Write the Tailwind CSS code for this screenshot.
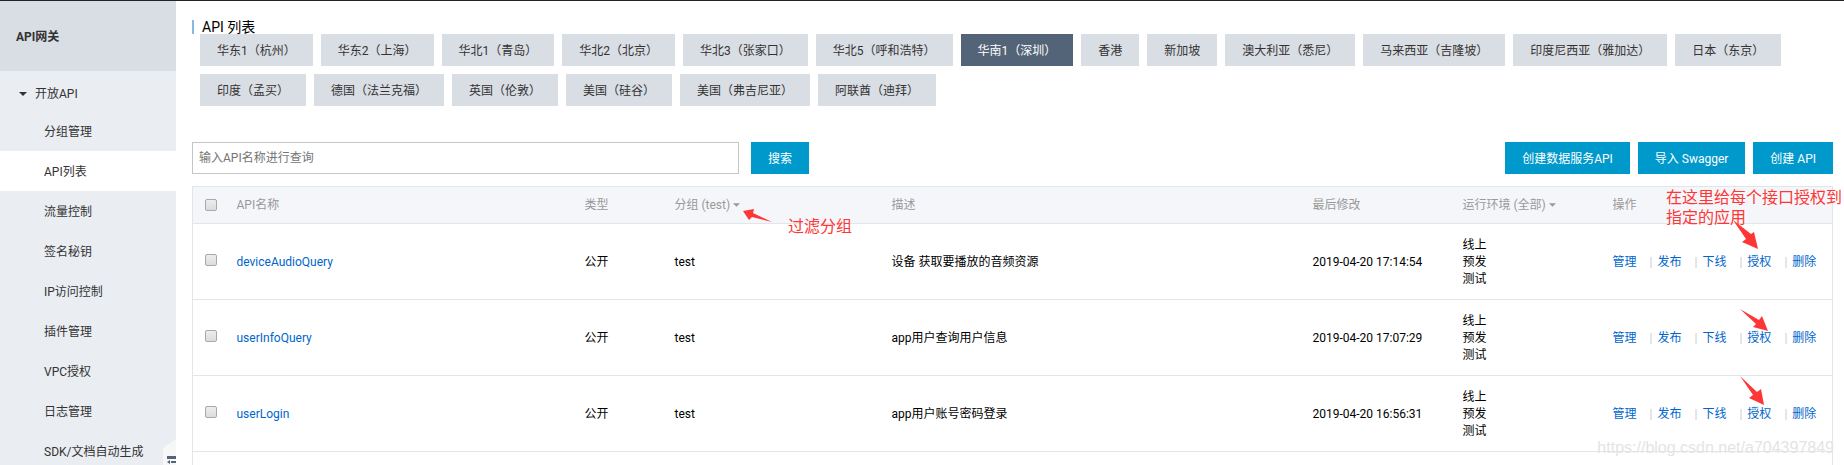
<!DOCTYPE html>
<html lang="zh-CN">
<head>
  <meta charset="UTF-8" />
  <meta name="viewport" content="width=device-width, initial-scale=1.0" />
  <title>API网关 - API 列表</title>
  <script src="https://cdn.jsdelivr.net/npm/@tailwindcss/browser@4"></script>
</head>
<body class="relative flex h-screen overflow-hidden border-t border-[#20232a] bg-white font-['Roboto','Noto_Sans_CJK_SC',sans-serif] text-xs text-black">
  <!-- 侧边栏 -->
  <aside class="relative w-44 shrink-0 overflow-hidden bg-[#eaedf1] text-[#333]">
    <h2 class="flex h-[70px] items-center bg-[#d9dde4] px-4 pt-0.5 font-bold">API网关</h2>
    <nav>
      <button type="button" class="flex h-10 w-full items-center gap-2 px-[19px] pt-1.5">
        <svg class="h-1 w-2" viewBox="0 0 8 4" fill="currentColor"><path d="M0 0h8L4 4z" /></svg>
        开放API
      </button>
      <ul id="menu"></ul>
    </nav>
    <button type="button" aria-label="收起菜单" class="absolute right-0 bottom-0 h-[26px] w-[13px]">
      <svg width="13" height="26" viewBox="0 0 13 26"><path fill="#f7f7f7" d="M13 0v26H0V9z" /><path fill="#546478" d="M4 17h9v3H4zM8 22h5v2H8zM4 23l3-2v4z" /></svg>
    </button>
  </aside>

  <!-- 主内容 -->
  <main class="min-w-0 flex-1 pt-[19px] pr-[11px] pl-4">
    <h1 class="border-l-2 border-[#88b7e0] pl-2 text-sm leading-[14px]">API 列表</h1>
    <div id="regions" class="flex flex-wrap gap-2 pl-2"></div>

    <div class="mt-9 flex items-center">
      <input id="keyword" type="text" aria-label="API名称" placeholder="输入API名称进行查询" class="mr-3 h-8 w-[547px] border border-[#c3c5c6] px-[6px] placeholder:text-[#757575]" />
      <button type="button" class="h-8 bg-[#0099cc] px-[17px] pt-0.5 text-white">搜索</button>
      <div class="ml-auto flex gap-2">
        <button type="button" class="h-8 bg-[#0099cc] px-[17px] pt-0.5 text-white">创建数据服务API</button>
        <button type="button" class="h-8 bg-[#0099cc] px-[17px] pt-0.5 text-white">导入 Swagger</button>
        <button type="button" class="h-8 bg-[#0099cc] px-[17px] pt-0.5 text-white">创建 API</button>
      </div>
    </div>

    <table class="mt-3 w-full table-fixed border-collapse border border-[#e1e6eb] leading-[17px]">
      <colgroup>
        <col class="w-9" />
        <col class="w-[348px]" />
        <col class="w-[90px]" />
        <col class="w-[217px]" />
        <col />
        <col class="w-[150px]" />
        <col class="w-[150px]" />
        <col class="w-[228px]" />
      </colgroup>
      <thead class="bg-[#f5f6fa] text-left text-[#999]">
        <tr class="h-[37px]">
          <th class="pl-3"><input type="checkbox" aria-label="全选" class="block size-3 appearance-none rounded-xs border border-[#a9a9a9] bg-linear-to-b from-[#ededed] to-[#dcdcdc]" /></th>
          <th class="px-2 font-normal">API名称</th>
          <th class="px-2 font-normal">类型</th>
          <th class="px-2 font-normal">
            <button type="button" class="flex items-center gap-[3px]">分组 (test)<svg class="h-1 w-[7px]" viewBox="0 0 8 4" fill="currentColor"><path d="M0 0h8L4 4z" /></svg></button>
          </th>
          <th class="px-2 font-normal">描述</th>
          <th class="px-2 font-normal">最后修改</th>
          <th class="px-2 font-normal">
            <button type="button" class="flex items-center gap-[3px]">运行环境 (全部)<svg class="h-1 w-[7px]" viewBox="0 0 8 4" fill="currentColor"><path d="M0 0h8L4 4z" /></svg></button>
          </th>
          <th class="px-2 font-normal">操作</th>
        </tr>
      </thead>
      <tbody id="rows"></tbody>
    </table>
  </main>

  <!-- 标注 -->
  <p class="absolute top-[216px] left-[788px] text-base leading-5 text-[#fe3636]">过滤分组</p>
  <p class="absolute top-[187px] left-[1666px] w-[178px] text-base leading-5 text-[#fe3636]">在这里给每个接口授权到指定的应用</p>
  <svg class="pointer-events-none absolute top-[-1px] left-0" width="1844" height="465" fill="#fe3636">
    <path d="M743 211l11-2-1 4 19 9-20-5-3 3z" />
    <path d="M1733 220l18 14 3-2 4 17-16-7 4-3z" />
    <path d="M1740 309l19 11 3-4 6 15-15-4 3-3z" />
    <path d="M1740 376l17 16 4-3 3 16-15-7 4-3z" />
  </svg>
  <p class="absolute right-[10px] bottom-[5px] font-['Liberation_Sans',sans-serif] text-base text-[#e4e4e4]">https://blog.csdn.net/a704397849</p>

  <script>
    const menu = ["分组管理", "API列表", "流量控制", "签名秘钥", "IP访问控制", "插件管理", "VPC授权", "日志管理", "SDK/文档自动生成"];
    const regions = [
      "华东1（杭州）", "华东2（上海）", "华北1（青岛）", "华北2（北京）", "华北3（张家口）", "华北5（呼和浩特）",
      "华南1（深圳）", "香港", "新加坡", "澳大利亚（悉尼）", "马来西亚（吉隆坡）", "印度尼西亚（雅加达）", "日本（东京）",
      "印度（孟买）", "德国（法兰克福）", "英国（伦敦）", "美国（硅谷）", "美国（弗吉尼亚）", "阿联酋（迪拜）",
    ];
    const apis = [
      { name: "deviceAudioQuery", desc: "设备 获取要播放的音频资源", time: "2019-04-20 17:14:54" },
      { name: "userInfoQuery", desc: "app用户查询用户信息", time: "2019-04-20 17:07:29" },
      { name: "userLogin", desc: "app用户账号密码登录", time: "2019-04-20 16:56:31" },
    ];
    const actions = ["管理", "发布", "下线", "授权", "删除"];

    document.getElementById("menu").innerHTML = menu.map((m) => `
      <li><a href="#" class="flex h-10 items-center pt-px pl-11 ${m === "API列表" ? "bg-white" : ""}">${m}</a></li>`).join("");

    document.getElementById("regions").innerHTML = regions.map((r) => `
      <button type="button" class="h-8 px-[17px] pt-0.5 ${r === "华南1（深圳）" ? "bg-[#546478] text-white" : "bg-[#d9dde4] text-[#333]"}">${r}</button>`).join("");

    document.getElementById("rows").innerHTML = apis.map((a) => `
      <tr class="h-[76px] border-t border-[#e1e6eb]">
        <td class="pb-1 pl-3"><input type="checkbox" aria-label="${a.name}" class="block size-3 appearance-none rounded-xs border border-[#a9a9a9] bg-linear-to-b from-[#ededed] to-[#dcdcdc]" /></td>
        <td class="px-2 pt-0.5"><a href="#" class="text-[#0066cc]">${a.name}</a></td>
        <td class="px-2 pt-0.5">公开</td>
        <td class="px-2 pt-0.5">test</td>
        <td class="px-2 pt-0.5">${a.desc}</td>
        <td class="px-2 pt-0.5">${a.time}</td>
        <td class="px-2 pt-0.5">线上<br />预发<br />测试</td>
        <td class="px-2 pt-0.5"><div class="flex">${actions.map((t) => `<a href="#" class="text-[#0066cc]">${t}</a>`).join('<span class="pr-[5px] pl-[13px] text-[#ccc]">|</span>')}</div></td>
      </tr>`).join("") + `
      <tr class="h-10 border-t border-[#e1e6eb]"><td colspan="8"></td></tr>`;
  </script>
</body>
</html>
